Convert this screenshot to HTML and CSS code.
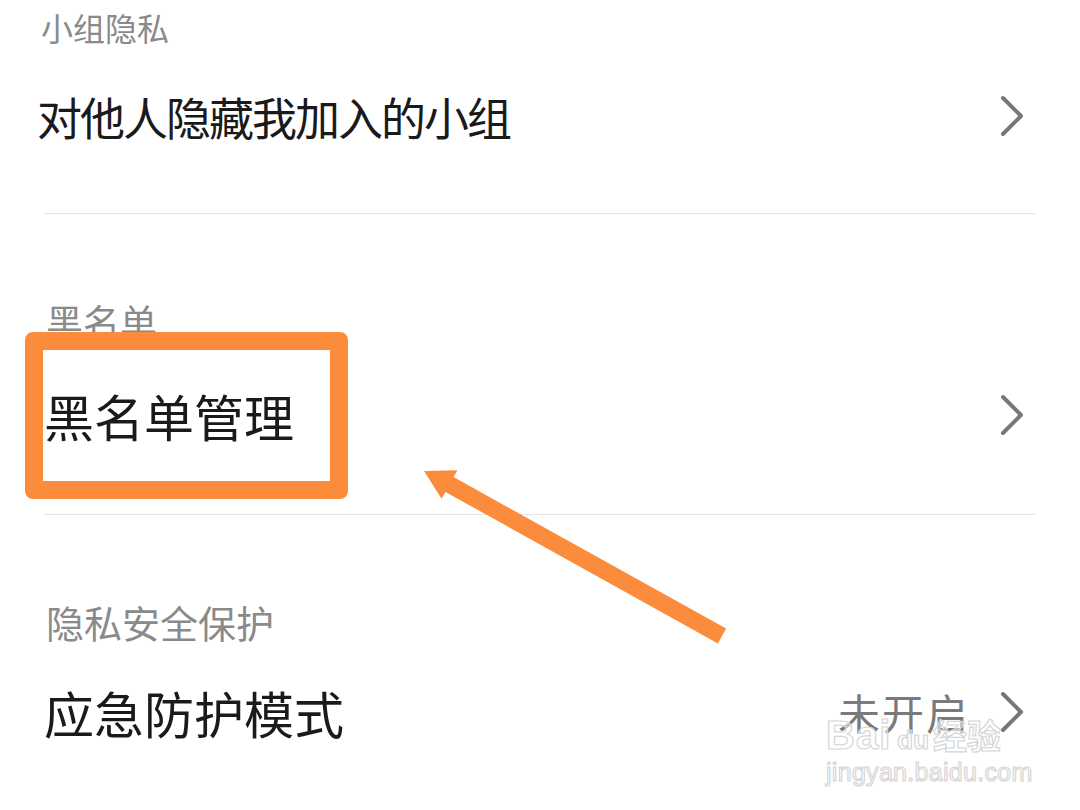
FILE: index.html
```html
<!DOCTYPE html>
<html lang="zh-CN">
<head>
<meta charset="utf-8">
<title>隐私设置</title>
<link rel="stylesheet" href="styles.css">
</head>
<body>
<div class="page">
  <section class="group group-first">
    <div class="label label-small">小组隐私</div>
    <div class="row row-1">
      <span class="title title-tight">对他人隐藏我加入的小组</span>
      <span class="right">
        <svg class="chev" viewBox="0 0 24 42" width="24" height="42"><polyline points="3,3 21,21 3,39" fill="none" stroke="#777" stroke-width="4" stroke-linecap="round" stroke-linejoin="round"/></svg>
      </span>
    </div>
    <div class="divider"></div>
  </section>

  <section class="group">
    <div class="label label-mid">黑名单</div>
    <div class="row row-2">
      <span class="title">黑名单管理</span>
      <span class="right">
        <svg class="chev" viewBox="0 0 24 42" width="24" height="42"><polyline points="3,3 21,21 3,39" fill="none" stroke="#777" stroke-width="4" stroke-linecap="round" stroke-linejoin="round"/></svg>
      </span>
    </div>
    <div class="divider"></div>
  </section>

  <section class="group">
    <div class="label label-large">隐私安全保护</div>
    <div class="row row-3">
      <span class="title">应急防护模式</span>
      <span class="right">
        <span class="value">未开启</span>
        <svg class="chev" viewBox="0 0 24 42" width="24" height="42"><polyline points="3,3 21,21 3,39" fill="none" stroke="#777" stroke-width="4" stroke-linecap="round" stroke-linejoin="round"/></svg>
      </span>
    </div>
  </section>

  <div class="highlight-box"></div>
  <svg class="pointer" viewBox="0 0 1080 810" width="1080" height="810">
    <polygon points="424,471 457.4,470.2 453.6,477.1 726.1,628.6 717.9,643.4 445.4,491.9 441.6,498.8" fill="#fb8c3c"/>
  </svg>

  <div class="watermark">
    <div class="wm-top"><span class="wm-bai">Bai</span><span class="wm-du">du</span><span class="wm-jy">经验</span></div>
    <div class="wm-url">jingyan.baidu.com</div>
  </div>
</div>
</body>
</html>
```

FILE: styles.css
```css
html, body {
  margin: 0;
  padding: 0;
  background: #ffffff;
}

body {
  font-family: "Noto Sans CJK SC", "Noto Sans", sans-serif;
  color: #1a1a1a;
}

.page {
  position: relative;
  width: 1080px;
  height: 810px;
  overflow: hidden;
  padding: 0 45px 0 44px;
  box-sizing: border-box;
}

.group-first {
  padding-top: 11px;
}

.label {
  color: #8a8a8a;
  white-space: nowrap;
}

.label-small {
  font-size: 32px;
  line-height: 32px;
  height: 32px;
  margin-left: -3px;
}

.label-mid {
  font-size: 37px;
  line-height: 37px;
  height: 37px;
  margin-top: 89px;
  margin-left: 2px;
}

.label-large {
  font-size: 38px;
  line-height: 38px;
  height: 38px;
  margin-top: 88px;
  margin-left: 2px;
}

.row {
  display: flex;
  align-items: center;
  justify-content: space-between;
}

.row-1 { height: 146px; }
.row-2 { height: 150px; }
.row-3 { height: 142px; }

.title {
  font-size: 50px;
  line-height: 50px;
  white-space: nowrap;
}

.title-tight {
  font-size: 45px;
  line-height: 45px;
  letter-spacing: -2px;
  margin-left: -7px;
}

.right {
  display: flex;
  align-items: center;
  gap: 30px;
  margin-right: 11px;
}

.value {
  color: #7a7a7a;
  font-size: 42px;
  line-height: 42px;
  letter-spacing: 2px;
}

.chev {
  display: block;
}

.divider {
  height: 1px;
  background: #e4e4e4;
  margin-top: 24px;
}

.highlight-box {
  position: absolute;
  left: 25px;
  top: 332px;
  width: 323px;
  height: 167px;
  box-sizing: border-box;
  border: 18px solid #fb8c3c;
  border-radius: 8px;
}

.pointer {
  position: absolute;
  left: 0;
  top: 0;
  pointer-events: none;
}

.watermark {
  position: absolute;
  left: 826px;
  top: 714px;
  color: rgba(255, 255, 255, 0.55);
  -webkit-text-stroke: 1.2px #d6d6d6;
  font-family: "Liberation Sans", "Noto Sans CJK SC", sans-serif;
  white-space: nowrap;
}

.wm-top {
  display: flex;
  align-items: baseline;
  height: 42px;
}

.wm-bai {
  font-size: 40px;
  font-weight: bold;
  line-height: 42px;
  letter-spacing: 1px;
}

.wm-du {
  font-size: 26px;
  font-weight: bold;
  line-height: 42px;
  margin-left: 6px;
  margin-right: 4px;
}

.wm-jy {
  font-family: "Noto Sans CJK SC", sans-serif;
  font-size: 34px;
  font-weight: bold;
  line-height: 42px;
}

.wm-url {
  font-size: 25px;
  line-height: 28px;
  letter-spacing: 0.3px;
  margin-top: 2px;
}
```
